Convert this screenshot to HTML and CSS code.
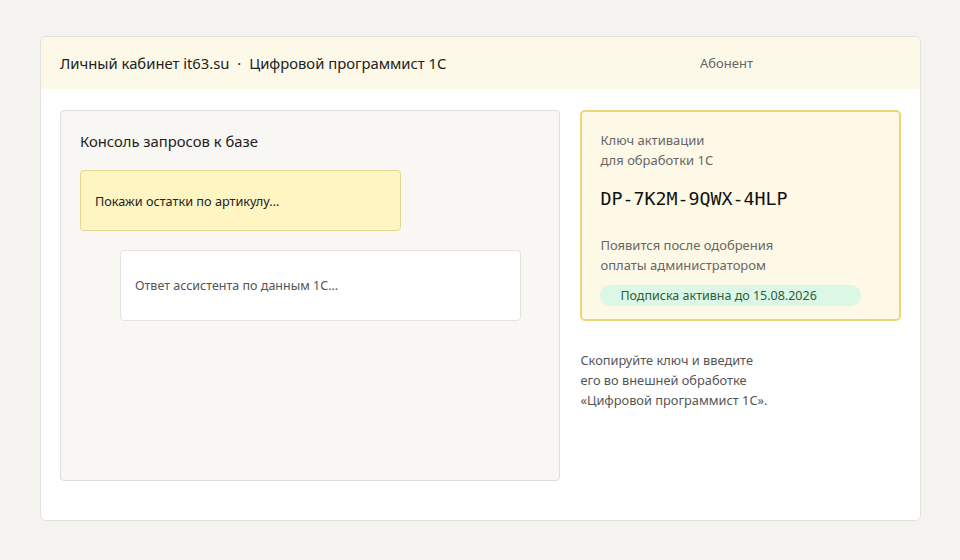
FILE: index.html
```html
<!DOCTYPE html>
<html lang="ru">
<head>
    <meta charset="UTF-8">
    <meta name="viewport" content="width=device-width, initial-scale=1.0">
    <title>Личный кабинет it63.su</title>
    <link rel="stylesheet" href="styles.css">
</head>
<body>
    <div class="cabinet">
        <header class="topbar">
            <div class="brand">Личный кабинет it63.su <span class="sep">·</span> Цифровой программист 1С</div>
            <div class="role">Абонент</div>
        </header>

        <main class="content">
            <section class="console">
                <h2>Консоль запросов к базе</h2>
                <div class="msg msg-user">Покажи остатки по артикулу...</div>
                <div class="msg msg-bot">Ответ ассистента по данным 1С...</div>
            </section>

            <aside class="side">
                <div class="key-card">
                    <div class="key-label">Ключ активации<br>для обработки 1С</div>
                    <div class="key-value">DP-7K2M-9QWX-4HLP</div>
                    <div class="key-note">Появится после одобрения<br>оплаты администратором</div>
                    <div class="badge">Подписка активна до 15.08.2026</div>
                </div>
                <p class="hint">Скопируйте ключ и введите<br>его во внешней обработке<br>«Цифровой программист 1С».</p>
            </aside>
        </main>
    </div>
</body>
</html>
```

FILE: styles.css
```css
:root {
    --page-bg: #f4f3f0;
    --line: #e4e2de;
    --cream: #fdf9e9;
    --text-dark: #222;
    --text-grey: #666;
}

* {
    margin: 0;
    padding: 0;
    box-sizing: border-box;
    font-family: "Noto Sans", "Open Sans", sans-serif;
}

body {
    background: var(--page-bg);
    padding: 36px 39px 40px 40px;
}

.cabinet {
    background: #fff;
    border: 1px solid var(--line);
    border-radius: 6px;
    overflow: hidden;
    height: 485px;
}

.topbar {
    height: 52px;
    background: var(--cream);
    display: flex;
    align-items: center;
    padding: 0 19px;
}

.brand {
    font-size: 14.8px;
    color: var(--text-dark);
    width: 640px;
}

.brand .sep {
    margin: 0 4px;
}

.role {
    font-size: 13px;
    color: var(--text-grey);
}

.content {
    display: flex;
    gap: 20px;
    padding: 21px 19px;
}

.console {
    width: 501px;
    height: 371px;
    background: #f8f7f4;
    border: 1px solid #e0ded9;
    border-radius: 4px;
    padding: 19px 19px;
}

.console h2 {
    font-size: 14.8px;
    font-weight: 400;
    color: var(--text-dark);
    line-height: 22px;
    margin-bottom: 18px;
}

.msg {
    font-size: 12.7px;
    border-radius: 4px;
    display: flex;
    align-items: center;
}

.msg-user {
    width: 321px;
    height: 61px;
    background: #fef5c2;
    border: 1px solid #e6d68c;
    color: var(--text-dark);
    padding: 0 14px;
}

.msg-bot {
    width: 401px;
    height: 71px;
    margin: 19px 0 0 40px;
    background: #fff;
    border: 1px solid var(--line);
    color: #555;
    font-size: 12.5px;
    padding: 0 14px;
}

.side {
    width: 321px;
}

.key-card {
    height: 211px;
    background: #fef9e6;
    border: 2px solid #e8d67a;
    border-radius: 5px;
    padding: 18px 18px;
}

.key-label,
.key-note {
    font-size: 13px;
    line-height: 20px;
    color: var(--text-grey);
}

.key-value {
    font-family: "DejaVu Sans Mono", "Liberation Mono", monospace;
    font-size: 18.3px;
    color: #111;
    margin: 17px 0 24px;
    line-height: 24px;
}

.badge {
    margin-top: 10px;
    width: 261px;
    height: 21px;
    line-height: 21px;
    background: #dcf7e6;
    border-radius: 10px;
    padding: 0 20px;
    font-size: 12.5px;
    color: #2c5e3c;
}

.hint {
    margin-top: 29px;
    font-size: 12.8px;
    line-height: 20px;
    color: #555;
}
```
